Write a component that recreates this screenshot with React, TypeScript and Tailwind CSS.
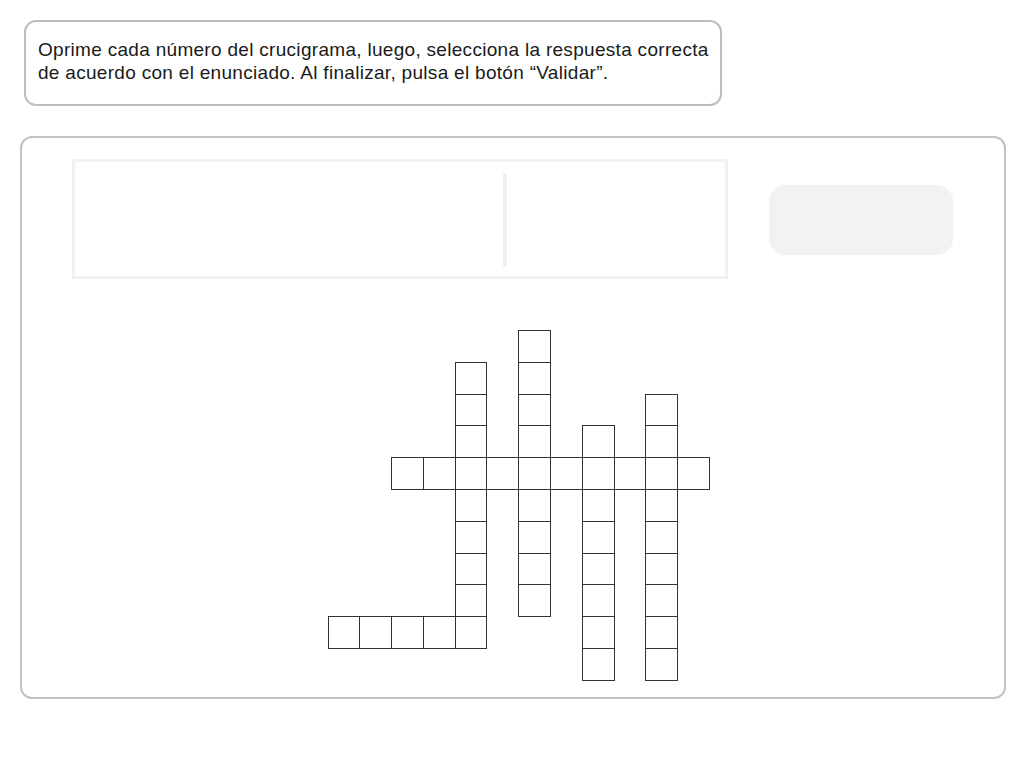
const filled = new Set<string>();
const add = (r: number, c: number) => filled.add(`${r}-${c}`);
for (let c = 0; c <= 4; c++) add(9, c);
for (let c = 2; c <= 11; c++) add(4, c);
for (let r = 1; r <= 9; r++) add(r, 4);
for (let r = 0; r <= 8; r++) add(r, 6);
for (let r = 3; r <= 10; r++) add(r, 8);
for (let r = 2; r <= 10; r++) add(r, 10);

function Crossword() {
  const slots = [];
  for (let r = 0; r < 11; r++) {
    for (let c = 0; c < 12; c++) {
      const on = filled.has(`${r}-${c}`);
      slots.push(
        <div key={`${r}-${c}`} className="relative">
          {on && (
            <button className="absolute left-0 top-0 w-[32.8px] h-[32.8px] border border-[#333] bg-white" />
          )}
        </div>
      );
    }
  }
  return (
    <div className="grid grid-cols-[repeat(12,31.8px)] grid-rows-[repeat(11,31.8px)]">
      {slots}
    </div>
  );
}

export default function App() {
  return (
    <div className="w-[1024px] h-[768px] bg-white font-['Liberation_Sans',Arial,sans-serif] text-[#1a1a1a] overflow-hidden">
      <div className="ml-[24px] mt-[20px] w-[698px] h-[86px] border-2 border-[#bdbdbd] rounded-[12px] px-[12px] pt-[16px]">
        <p className="text-[19px] leading-[23px] tracking-[0.3px] whitespace-nowrap">
          Oprime cada número del crucigrama, luego, selecciona la respuesta correcta
          <br />
          de acuerdo con el enunciado. Al finalizar, pulsa el botón “Validar”.
        </p>
      </div>

      <div className="ml-[20px] mt-[30px] w-[986px] h-[563px] border-2 border-[#c2c2c2] rounded-[12px] pt-[21px] pl-[50px]">
        <div className="flex items-start">
          <div className="w-[656px] h-[120px] border-[3px] border-[#f2f2f2] pt-[11px] pl-[428px]">
            <div className="w-[4px] h-[94px] rounded-full bg-[#efefef]" />
          </div>
          <button className="ml-[41px] mt-[26px] w-[184px] h-[70px] rounded-[16px] bg-[#f2f2f2]" />
        </div>
        <div className="mt-[51px] ml-[255.5px]">
          <Crossword />
        </div>
      </div>
    </div>
  );
}
